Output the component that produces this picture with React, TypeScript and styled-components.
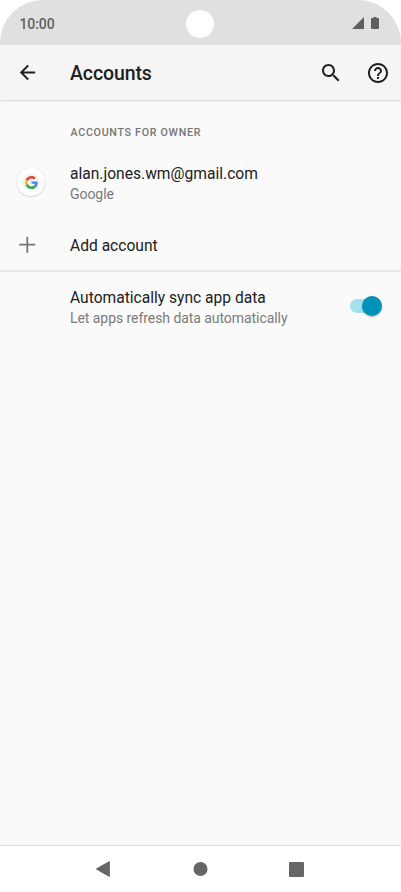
import React from "react";
import styled, { createGlobalStyle } from "styled-components";

const GlobalStyle = createGlobalStyle`
  * { box-sizing: border-box; }
  body { margin: 0; background: #fff; font-family: Roboto, "Liberation Sans", sans-serif; }
  svg { display: block; flex: none; }
`;

const Screen = styled.div`
  width: 401px;
  height: 892px;
  display: flex;
  flex-direction: column;
  overflow: hidden;
  background: #fafafa;
  border-radius: 43px 43px 0 0;
`;

const StatusBar = styled.header`
  flex: none;
  height: 45px;
  display: grid;
  grid-template-columns: 1fr 28px 1fr;
  align-items: center;
  padding: 1px 22px 0 19.5px;
  background: #e0e0e0;
  color: #5f5f5f;
`;

const Clock = styled.span`
  padding-top: 2px;
  font-size: 14px;
  font-weight: 500;
  line-height: 20px;
  letter-spacing: -0.1px;
`;

const Camera = styled.span`
  width: 28px;
  height: 28px;
  margin: 2px 0 0 1px;
  border-radius: 50%;
  background: #fff;
`;

const StatusIcons = styled.div`
  display: flex;
  justify-content: flex-end;
  align-items: center;
  gap: 7px;
  padding-bottom: 1px;
`;

const Toolbar = styled.div`
  flex: none;
  height: 55px;
  display: flex;
  align-items: center;
  padding: 0 11.5px 0 16px;
  background: #f5f5f5;
  box-shadow: 0 1px 2px rgba(0, 0, 0, 0.15);
  color: #202020;
`;

const Title = styled.h1`
  flex: 1;
  margin: 3px 0 0 31px;
  font-size: 19.5px;
  font-weight: 500;
  line-height: 26px;
  letter-spacing: -0.1px;
`;

const IconButton = styled.button`
  display: flex;
  padding: 0;
  border: 0;
  background: none;
  color: inherit;
  & + & { margin-left: 23px; }
`;

const Content = styled.main`
  flex: 1;
  display: flex;
  flex-direction: column;
`;

const Caption = styled.h2`
  margin: 25px 0 0 70.5px;
  font-size: 10.7px;
  font-weight: 500;
  line-height: 16px;
  letter-spacing: 0.7px;
  color: #757575;
`;

const Row = styled.div<{ $height: number }>`
  height: ${(p) => p.$height}px;
  display: grid;
  grid-template-columns: 54px 1fr auto;
  align-items: center;
  padding: 0 18.5px 0 16px;
`;

const Divider = styled.hr`
  width: 100%;
  margin: 6px 0 0;
  border: 0;
  height: 2px;
  background: #e8e8e8;
`;

const RowLabel = styled.div`
  grid-column: 2;
  display: flex;
  flex-direction: column;
`;

const Primary = styled.span`
  padding-top: 1px;
  font-size: 15.6px;
  line-height: 20px;
  color: #212121;
`;

const Secondary = styled.span`
  padding-top: 1px;
  font-size: 14px;
  line-height: 19px;
  letter-spacing: -0.06px;
  color: #7a7a7a;
`;

const Avatar = styled.span`
  width: 28px;
  height: 28px;
  margin: 0 0 3px 1px;
  display: flex;
  align-items: center;
  justify-content: center;
  border-radius: 50%;
  background: #fff;
  box-shadow: 0 0.5px 2px rgba(0, 0, 0, 0.22);
`;

const AvatarDisc = styled.span`
  width: 18px;
  height: 18px;
  display: flex;
  align-items: center;
  justify-content: center;
  border-radius: 50%;
  background: #f5f5f5;
`;

const Switch = styled.button`
  width: 33px;
  height: 20px;
  display: flex;
  align-items: center;
  padding: 0;
  margin-bottom: 3px;
  border: 0;
  background: none;
`;

const Track = styled.span`
  width: 30px;
  height: 14px;
  display: flex;
  align-items: center;
  justify-content: flex-end;
  border-radius: 7px;
  background: #a5e1eb;
`;

const Thumb = styled.span`
  flex: none;
  width: 20px;
  height: 20px;
  margin-right: -2.5px;
  border-radius: 50%;
  background: #0091b8;
  box-shadow: 0 1px 2px rgba(0, 0, 0, 0.28);
`;

const NavBar = styled.nav`
  flex: none;
  height: 47px;
  display: flex;
  justify-content: space-between;
  align-items: center;
  padding: 0 97px 0 95px;
  border-top: 1px solid #dedede;
  background: #fff;
  color: #666;
`;

const GoogleMark = () => (
  <svg width="13" height="13" viewBox="0 0 48 48">
    <path fill="#EA4335" d="M24 9.5c3.54 0 6.71 1.22 9.21 3.6l6.85-6.85C35.9 2.38 30.47 0 24 0 14.62 0 6.51 5.38 2.56 13.22l7.98 6.19C12.43 13.72 17.74 9.5 24 9.5z" />
    <path fill="#4285F4" d="M46.98 24.55c0-1.57-.15-3.09-.38-4.55H24v9.02h12.94c-.58 2.96-2.26 5.48-4.78 7.18l7.73 6c4.51-4.18 7.09-10.36 7.09-17.65z" />
    <path fill="#FBBC05" d="M10.53 28.59c-.48-1.45-.76-2.99-.76-4.59s.27-3.14.76-4.59l-7.98-6.19C.92 16.46 0 20.12 0 24c0 3.88.92 7.54 2.56 10.78l7.97-6.19z" />
    <path fill="#34A853" d="M24 48c6.48 0 11.93-2.13 15.89-5.81l-7.73-6c-2.15 1.45-4.92 2.3-8.16 2.3-6.26 0-11.57-4.22-13.47-9.91l-7.98 6.19C6.51 42.62 14.62 48 24 48z" />
  </svg>
);

export default function App() {
  return (
    <>
      <GlobalStyle />
      <Screen>
        <StatusBar>
          <Clock>10:00</Clock>
          <Camera />
          <StatusIcons>
            <svg width="12" height="12" viewBox="0 0 12 12" fill="currentColor">
              <path d="M0 12 12 0v12z" />
            </svg>
            <svg width="8" height="12" viewBox="0 0 8 12" fill="currentColor">
              <path d="M2.5 0h3v1h1.7c.5 0 .8.3.8.8v9.400c0 .5-.3.8-.8.8H.8c-.5 0-.8-.3-.8-.8V1.800C0 1.300.3 1 .8 1h1.700z" />
            </svg>
          </StatusIcons>
        </StatusBar>
        <Toolbar>
          <IconButton aria-label="Back">
            <svg width="23" height="23" viewBox="0 0 24 24" fill="currentColor">
              <path d="M20 11H7.830l5.590-5.590L12 4l-8 8 8 8 1.410-1.410L7.830 13H20v-2z" />
            </svg>
          </IconButton>
          <Title>Accounts</Title>
          <IconButton aria-label="Search">
            <svg width="24" height="24" viewBox="0 0 24 24" fill="currentColor">
              <path d="M15.500 14h-.790l-.280-.270C15.410 12.590 16 11.110 16 9.500 16 5.910 13.090 3 9.500 3S3 5.910 3 9.500 5.910 16 9.500 16c1.610 0 3.090-.590 4.230-1.570l.270.280v.790l5 4.990L20.490 19l-4.990-5zm-6 0C7.010 14 5 11.990 5 9.500S7.010 5 9.500 5 14 7.010 14 9.500 11.990 14 9.500 14z" />
            </svg>
          </IconButton>
          <IconButton aria-label="Help">
            <svg width="24" height="24" viewBox="0 0 24 24" fill="currentColor">
              <path d="M11 18h2v-2h-2v2zm1-16C6.480 2 2 6.480 2 12s4.480 10 10 10 10-4.480 10-10S17.520 2 12 2zm0 18c-4.410 0-8-3.590-8-8s3.590-8 8-8 8 3.590 8 8-3.590 8-8 8zm0-14c-2.210 0-4 1.790-4 4h2c0-1.100.9-2 2-2s2 .9 2 2c0 2-3 1.750-3 5h2c0-2.250 3-2.500 3-5 0-2.210-1.790-4-4-4z" />
            </svg>
          </IconButton>
        </Toolbar>
        <Content>
          <Caption>ACCOUNTS FOR OWNER</Caption>
          <Row $height={85}>
            <Avatar>
              <AvatarDisc>
                <GoogleMark />
              </AvatarDisc>
            </Avatar>
            <RowLabel>
              <Primary>alan.jones.wm@gmail.com</Primary>
              <Secondary>Google</Secondary>
            </RowLabel>
          </Row>
          <Row $height={38}>
            <svg width="23" height="23" viewBox="0 0 23 23" fill="none" stroke="#757575" strokeWidth="1.800">
              <path d="M11.300 2.700v16M3.300 10.700h16" />
            </svg>
            <RowLabel>
              <Primary>Add account</Primary>
            </RowLabel>
          </Row>
          <Divider />
          <Row $height={71}>
            <RowLabel>
              <Primary>Automatically sync app data</Primary>
              <Secondary>Let apps refresh data automatically</Secondary>
            </RowLabel>
            <Switch role="switch" aria-checked="true" aria-label="Automatically sync app data">
              <Track>
                <Thumb />
              </Track>
            </Switch>
          </Row>
        </Content>
        <NavBar>
          <svg width="15" height="16" viewBox="0 0 15 16" fill="currentColor">
            <path d="M14 .300c.500-.200.900 0 .900.500v14.400c0 .500-.400.800-.900.500L1.300 8.500c-.400-.200-.400-.700 0-.900z" />
          </svg>
          <svg width="14" height="14" viewBox="-.5 0 14 14" fill="currentColor" overflow="visible">
            <circle cx="7" cy="7" r="7" />
          </svg>
          <svg width="15" height="15" viewBox="0 0 15 15" fill="currentColor">
            <rect width="15" height="15" rx="1" />
          </svg>
        </NavBar>
      </Screen>
    </>
  );
}
